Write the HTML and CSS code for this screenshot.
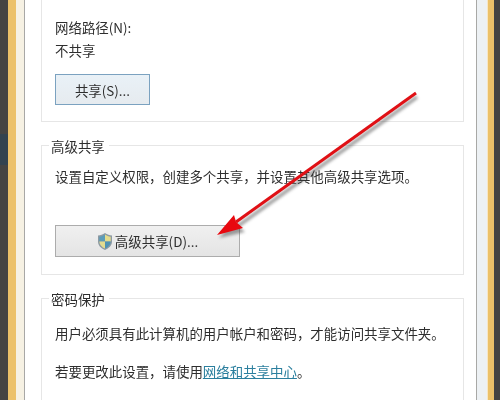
FILE: index.html
```html
<!DOCTYPE html>
<html lang="zh-CN">
<head>
<meta charset="utf-8">
<title>高级共享设置</title>
<link rel="stylesheet" href="styles.css">
</head>
<body>
<div class="frame">
  <div class="edge edge-left">
    <div class="dark dark-left"><div class="dark-band band-a"></div><div class="dark-band band-b"></div><div class="dark-band band-c"></div></div>
    <div class="orange"></div>
    <div class="cream"></div>
    <div class="hairline"></div>
  </div>
  <main class="panel">
    <section class="group group-top">
      <p class="line path-label">网络路径(N):</p>
      <p class="line path-value">不共享</p>
      <button class="btn btn-share">共享(S)...</button>
    </section>
    <section class="group group-advanced">
      <h2 class="legend">高级共享</h2>
      <p class="line adv-text">设置自定义权限，创建多个共享，并设置其他高级共享选项。</p>
      <button class="btn btn-advanced">
        <svg class="shield" viewBox="0 0 16 18" width="16" height="19" aria-hidden="true">
          <path d="M8 .6C5.8 2.3 3.4 3 1 3.1v6c0 4 3 6.900 7 8.300 4-1.400 7-4.300 7-8.300v-6C12.600 3 10.200 2.300 8 .6z" fill="#8d9aa3"/>
          <path d="M8 2v7H2.300V4.200C4.400 4 6.300 3.300 8 2z" fill="#5b9cb8"/>
          <path d="M8 2c1.700 1.300 3.600 2 5.700 2.200V9H8z" fill="#e4dc8c"/>
          <path d="M2.300 9H8v7C5 14.800 2.500 12.500 2.300 9z" fill="#e2dc90"/>
          <path d="M8 9h5.700c-.2 3.500-2.700 5.800-5.700 7z" fill="#4f93b4"/>
        </svg>
        <span>高级共享(D)...</span>
      </button>
    </section>
    <section class="group group-password">
      <h2 class="legend">密码保护</h2>
      <p class="line pw-text">用户必须具有此计算机的用户帐户和密码，才能访问共享文件夹。</p>
      <p class="line pw-link">若要更改此设置，请使用<a class="link" href="#">网络和共享中心</a>。</p>
    </section>
  </main>
  <div class="edge edge-right">
    <div class="hairline"></div>
    <div class="paleblue"></div>
    <div class="cream-thin"></div>
    <div class="orange orange-right"></div>
    <div class="dark"></div>
  </div>
  <svg class="arrow" viewBox="0 0 500 400" width="500" height="400" aria-hidden="true">
    <g class="arrow-shadow">
      <path d="M417 97 L238 226" stroke="#444" stroke-width="3.500" fill="none"/>
      <path d="M219 238 L236 219 L238 226 L245 232 Z" fill="#444"/>
    </g>
    <path d="M416 93 L236 222" stroke="#e01015" stroke-width="3" fill="none"/>
    <path d="M217 235 L234 215 L236 222 L243 228 Z" fill="#e8080f"/>
  </svg>
</div>
</body>
</html>
```

FILE: styles.css
```css
html, body {
  margin: 0;
  padding: 0;
  background: #fff;
}

.frame {
  position: relative;
  display: flex;
  width: 500px;
  height: 400px;
  overflow: hidden;
  font-family: "Noto Sans CJK SC", "Liberation Sans", sans-serif;
  font-size: 13.45px;
  color: #2e2e2e;
  filter: blur(0.35px);
}

.edge {
  display: flex;
  flex: none;
  height: 100%;
}
.edge-left { width: 25px; }
.edge-right { width: 24px; }

.dark {
  flex: none;
  width: 8px;
  background: #454442;
  display: flex;
  flex-direction: column;
}
.dark-left { width: 8px; }
.edge-right .dark { width: 6px; }

.dark-band { flex: none; }
.band-a { height: 134px; }
.band-b { height: 31px; background: #33434f; }
.band-c { flex: 1; }

.orange { flex: none; width: 8px; background: #ecc169; }
.orange-right { width: 6px; }
.cream { flex: none; width: 8px; background: #f6f1e3; }
.cream-thin { flex: none; width: 1px; background: #f8e6c4; }
.paleblue { flex: none; width: 10px; background: #edf1f4; }
.hairline { flex: none; width: 1px; background: #a8a8a6; }

.panel {
  flex: 1;
  min-width: 0;
  padding: 0 12px 0 16px;
  display: flex;
  flex-direction: column;
  gap: 23px;
  background: #fff;
}

.group {
  position: relative;
  flex: none;
  box-sizing: border-box;
  border: 1px solid #e6e6e6;
  padding: 0 13px;
}
.group-top {
  height: 122px;
  border-top: 0;
  padding-top: 18px;
}
.group-advanced {
  height: 130px;
  padding-top: 21px;
}
.group-password {
  height: 130px;
  padding-top: 25px;
}

.legend {
  position: absolute;
  top: -9px;
  left: 7px;
  margin: 0;
  padding: 0 4px 0 2px;
  background: #fff;
  font-size: 13.45px;
  line-height: 18px;
  font-weight: 400;
}

.line {
  margin: 0;
  line-height: 18px;
  white-space: nowrap;
}
.path-value { margin-top: 5px; }
.pw-link { margin-top: 20px; }

.link {
  color: #2b7f9e;
  text-decoration: underline;
}

.btn {
  display: flex;
  align-items: center;
  justify-content: center;
  box-sizing: border-box;
  height: 31px;
  padding: 0;
  font: inherit;
  color: #2e2e2e;
}
.btn-share {
  width: 95px;
  margin-top: 15px;
  border: 1px solid #7ba2c0;
  background: linear-gradient(#e9f1f7, #e6ebef);
}
.btn-advanced {
  width: 185px;
  height: 32px;
  margin-top: 40px;
  gap: 2px;
  border: 1px solid #acacac;
  background: linear-gradient(#f0f0f0, #e4e4e4);
}
.shield { flex: none; }

.arrow {
  position: absolute;
  top: 0;
  left: 0;
  pointer-events: none;
}
.arrow-shadow { opacity: 0.5; filter: blur(1.5px); }
```
